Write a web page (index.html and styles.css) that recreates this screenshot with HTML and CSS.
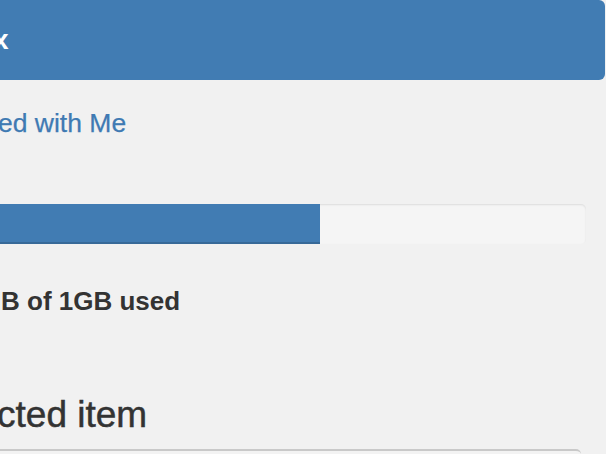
FILE: index.html
```html
<!DOCTYPE html>
<html lang="en">
<head>
<meta charset="utf-8">
<title>Files</title>
<link rel="stylesheet" href="styles.css">
</head>
<body>
<div class="sidebar">
  <header class="title-bar"><h1 class="title">Inbox</h1></header>
  <a class="nav-link" href="#">Shared with Me</a>
  <div class="progress"><div class="progress-fill" style="width: 60%"></div></div>
  <p class="usage">512MB of 1GB used</p>
  <h2 class="section-title">Selected item</h2>
  <div class="details"></div>
</div>
</body>
</html>
```
FILE: styles.css
```css
html, body {
  margin: 0;
  padding: 0;
  background: #f1f1f1;
  overflow: hidden;
}
body {
  width: 606px;
  height: 454px;
  font-family: "Liberation Sans", Arial, sans-serif;
  color: #333;
}
.sidebar {
  margin-left: -80px;
  width: 686px;
  display: flex;
  flex-direction: column;
}
.title-bar {
  height: 80px;
  margin-right: 1px;
  background: #417cb3;
  border-radius: 6px;
  display: flex;
  align-items: center;
  padding-left: 14px;
}
.title {
  margin: 0;
  font-size: 28px;
  line-height: 80px;
  font-weight: bold;
  color: #fff;
}
.nav-link {
  margin-top: 28px;
  padding-left: 22px;
  font-size: 26.5px;
  line-height: 30px;
  color: #3f7ab3;
  text-decoration: none;
  -webkit-text-stroke: 0.25px #3f7ab3;
}
.progress {
  margin-top: 66px;
  margin-right: 20px;
  height: 40px;
  background: #f5f5f5;
  border-radius: 5px;
  box-shadow: inset 0 1px 2px rgba(0,0,0,0.1);
  overflow: hidden;
}
.progress-fill {
  height: 100%;
  background: #417cb3;
  box-shadow: inset 0 -2px 0 rgba(0,0,0,0.15);
}
.usage {
  margin: 42px 0 0;
  padding-left: 16px;
  font-size: 26px;
  line-height: 30px;
  font-weight: bold;
  color: #333;
}
.section-title {
  margin: 79px 0 0;
  padding-left: 3px;
  font-size: 37px;
  line-height: 40px;
  font-weight: normal;
  color: #333;
  -webkit-text-stroke: 0.5px #333;
}
.details {
  margin-top: 14px;
  margin-right: 25px;
  height: 60px;
  border-top: 2px solid #c9c9c9;
  border-radius: 5px;
  background: #f3f3f3;
}
```
